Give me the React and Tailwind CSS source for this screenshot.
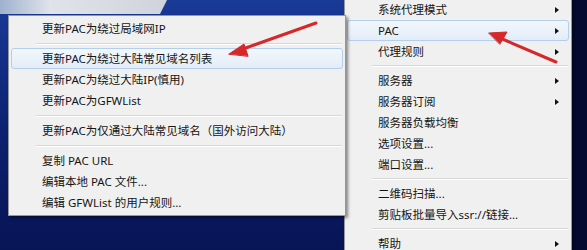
import React from 'react';

const font = { fontFamily: '"Noto Sans", "Noto Sans CJK SC", sans-serif' };

const subItems = [
  { label: '更新PAC为绕过局域网IP' },
  { sep: true },
  { label: '更新PAC为绕过大陆常见域名列表', active: true },
  { label: '更新PAC为绕过大陆IP(慎用)' },
  { label: '更新PAC为GFWList' },
  { sep: true },
  { label: '更新PAC为仅通过大陆常见域名（国外访问大陆）' },
  { sep: true },
  { label: '复制 PAC URL' },
  { label: '编辑本地 PAC 文件...' },
  { label: '编辑 GFWList 的用户规则...' },
];

const mainItems = [
  { label: '系统代理模式', sub: true },
  { label: 'PAC', sub: true, active: true },
  { label: '代理规则', sub: true },
  { sep: true },
  { label: '服务器', sub: true },
  { label: '服务器订阅', sub: true },
  { label: '服务器负载均衡' },
  { label: '选项设置...' },
  { label: '端口设置...' },
  { sep: true },
  { label: '二维码扫描...' },
  { label: '剪贴板批量导入ssr://链接...' },
  { sep: true },
  { label: '帮助', sub: true },
];

function Separator({ h }) {
  return (
    <div className={`flex items-center pl-[27px] pr-[3px] ${h}`}>
      <div className="w-full border-t border-[#d8d8d8] border-b border-b-white" />
    </div>
  );
}

function Row({ item }) {
  return (
    <div
      className={`mx-[2px] flex h-[21px] items-center justify-between rounded-[3px] border pl-[30px] pr-[9px] ${
        item.active
          ? 'border-[#b4cfee] bg-gradient-to-b from-[#f3f7fc] to-[#e3ecf7]'
          : 'border-transparent'
      }`}
    >
      <span className="text-[11.5px] leading-none text-[#151515]">{item.label}</span>
      {item.sub && (
        <span className="block h-0 w-0 border-y-[3.5px] border-l-[4px] border-y-transparent border-l-[#111]" />
      )}
    </div>
  );
}

function RedArrows() {
  return (
    <svg className="pointer-events-none absolute inset-0" width="587" height="250" viewBox="0 0 587 250">
      <g fill="#d6282a" stroke="#d6282a" strokeLinecap="round">
        <line x1="316" y1="23" x2="240" y2="50" strokeWidth="3" />
        <polygon points="229,54 244,44 248,56" strokeWidth="1" strokeLinejoin="round" />
        <line x1="556" y1="62" x2="500" y2="38" strokeWidth="3" />
        <polygon points="489,33 507,32 500,44" strokeWidth="1" strokeLinejoin="round" />
      </g>
    </svg>
  );
}

export default function App() {
  return (
    <div
      className="relative h-[250px] w-[587px] overflow-hidden bg-gradient-to-b from-[#1a3a98] via-[#0d2272] to-[#071455]"
      style={font}
    >
      {/* desktop edge / tray shape */}
      <svg className="absolute left-0 top-0" width="180" height="16" viewBox="0 0 180 16">
        <defs>
          <linearGradient id="tray" x1="0" x2="1" y1="0" y2="0">
            <stop offset="0" stopColor="#9fb1cf" />
            <stop offset="0.3" stopColor="#dfe3ea" />
            <stop offset="1" stopColor="#cfd4dc" />
          </linearGradient>
        </defs>
        <polygon points="0,0 167,0 160,14 0,14" fill="url(#tray)" />
      </svg>

      {/* dark strip on the right */}
      <div className="absolute right-0 top-0 h-full w-[15px] bg-[#040a30]" />

      {/* main tray menu */}
      <div className="absolute left-[344px] top-[-2px] w-[228px] border border-[#979797] bg-[#f0f0f0] pb-[4px] shadow-[2px_2px_3px_rgba(0,0,0,0.4)]">
        {mainItems.map((item, i) =>
          item.sep ? <Separator key={i} h="h-[8px]" /> : <Row key={i} item={item} />
        )}
      </div>

      {/* PAC submenu */}
      <div className="absolute left-[8px] top-[15px] w-[338px] border border-[#979797] bg-[#f0f0f0] py-[2px] shadow-[2px_2px_3px_rgba(0,0,0,0.45)]">
        {subItems.map((item, i) =>
          item.sep ? <Separator key={i} h="h-[9px]" /> : <Row key={i} item={item} />
        )}
      </div>

      <RedArrows />
    </div>
  );
}
